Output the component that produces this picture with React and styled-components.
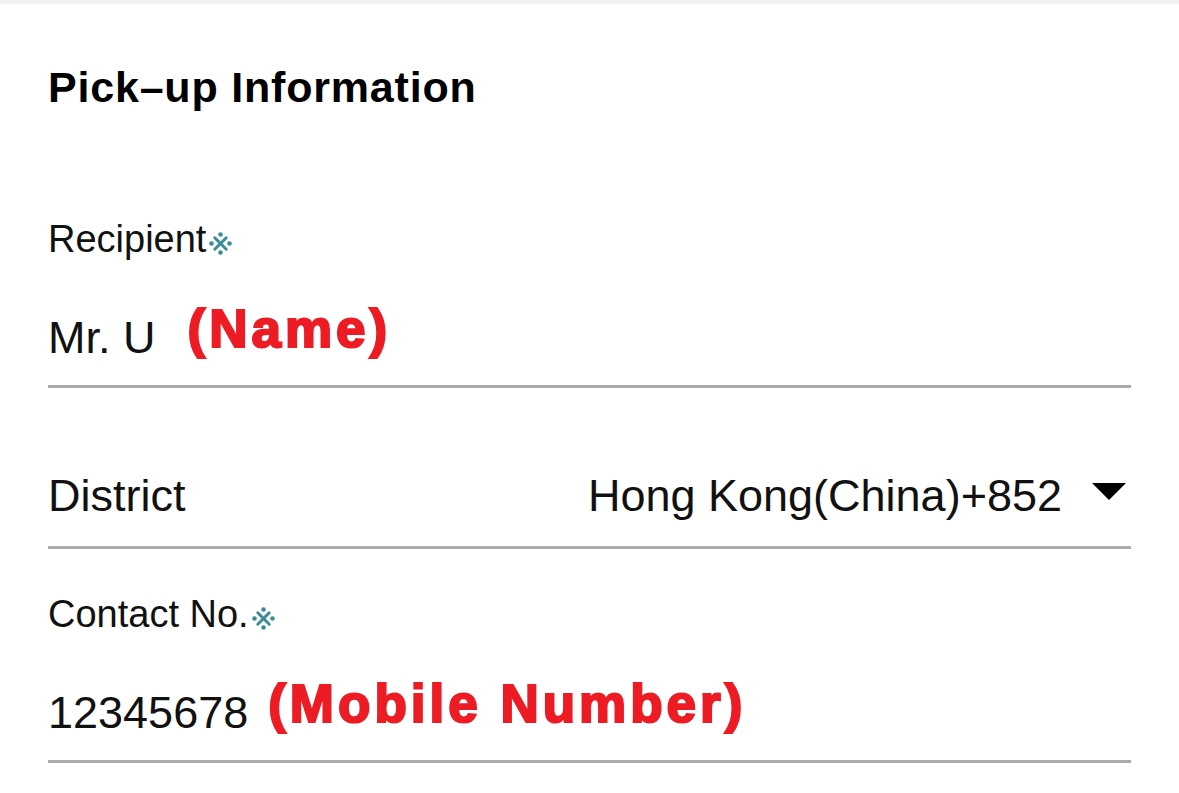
import React from 'react'
import styled, { createGlobalStyle } from 'styled-components'

const Global = createGlobalStyle`
  html, body {
    margin: 0;
    padding: 0;
    background: #fff;
    font-family: "Liberation Sans", Arial, sans-serif;
    color: #111;
  }
`

const Page = styled.div`
  border-top: 4px solid #f1f1f1;
  padding: 62px 48px 0;
`

const Title = styled.h2`
  margin: 0;
  font-size: 43px;
  line-height: 1;
  font-weight: 700;
  letter-spacing: 0.8px;
  color: #000;
`

const Field = styled.div`
  display: flex;
  flex-direction: column;
  margin-top: ${p => p.$top}px;
`

const Label = styled.div`
  font-size: 38px;
  line-height: 1;
  color: #111;
  display: flex;
  align-items: flex-end;
`

const Required = styled.svg`
  width: 23px;
  height: 23px;
  margin: 0 0 3px 3px;
  flex: none;
`

const ValueRow = styled.div`
  display: flex;
  align-items: baseline;
  justify-content: ${p => (p.$split ? 'space-between' : 'flex-start')};
  margin-top: ${p => p.$top || 0}px;
  padding-bottom: ${p => p.$pad}px;
  border-bottom: 3px solid #ababab;
  font-size: 45px;
  line-height: 1;
  color: #111;
`

const Note = styled.span`
  color: #ed1c24;
  font-size: 53px;
  font-weight: 700;
  letter-spacing: 4px;
  -webkit-text-stroke: 2.2px #ed1c24;
  margin-left: ${p => p.$gap}px;
  transform: translateY(-6px);
`

const Select = styled.div`
  display: flex;
  align-items: center;
  gap: 30px;
  padding-right: 5px;
`

const Caret = styled.span`
  width: 0;
  height: 0;
  border-left: 17px solid transparent;
  border-right: 17px solid transparent;
  border-top: 17px solid #000;
  transform: translateY(-4px);
`

function Mark() {
  return (
    <Required viewBox="0 0 22 22">
      <g stroke="#3a8c95" strokeWidth="2.8" strokeLinecap="round">
        <line x1="5.5" y1="5.5" x2="16.5" y2="16.5" />
        <line x1="16.5" y1="5.5" x2="5.5" y2="16.5" />
      </g>
      <g fill="#3a8c95">
        <circle cx="11" cy="2.4" r="2.2" />
        <circle cx="11" cy="19.6" r="2.2" />
        <circle cx="2.4" cy="11" r="2.2" />
        <circle cx="19.6" cy="11" r="2.2" />
      </g>
    </Required>
  )
}

export default function App() {
  return (
    <>
      <Global />
      <Page>
        <Title>Pick–up Information</Title>

        <Field $top={111}>
          <Label>Recipient<Mark /></Label>
          <ValueRow $top={50} $pad={24}>
            <span>Mr. U</span>
            <Note $gap={32}>(Name)</Note>
          </ValueRow>
        </Field>

        <Field $top={85}>
          <ValueRow $split $pad={28}>
            <span>District</span>
            <Select>
              <span>Hong Kong(China)+852</span>
              <Caret />
            </Select>
          </ValueRow>
        </Field>

        <Field $top={46}>
          <Label>Contact No.<Mark /></Label>
          <ValueRow $top={50} $pad={24}>
            <span>12345678</span>
            <Note $gap={20}>(Mobile Number)</Note>
          </ValueRow>
        </Field>
      </Page>
    </>
  )
}
